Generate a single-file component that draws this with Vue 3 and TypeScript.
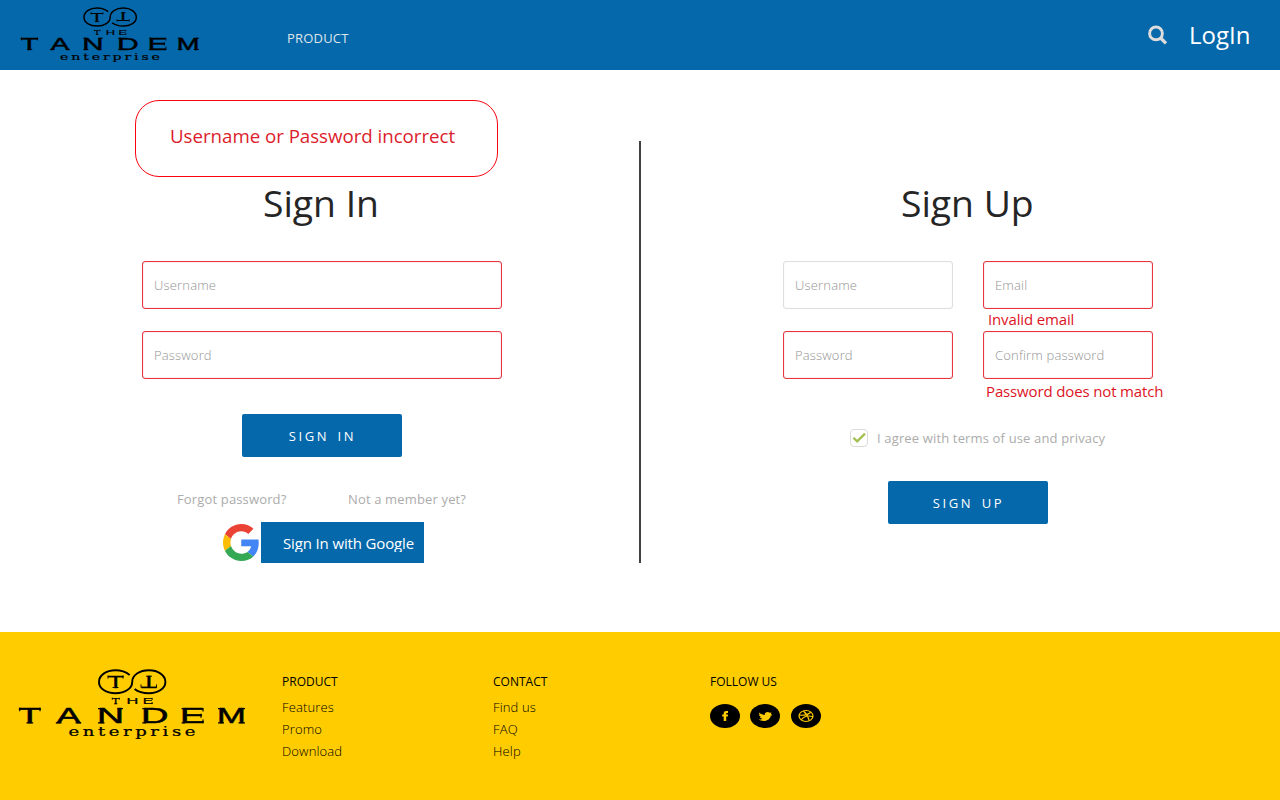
<script setup lang="ts">
import { ref } from 'vue'

interface Field {
  name: string
  label: string
  type: string
  invalid: boolean
  error?: string
}

const signInFields: Field[] = [
  { name: 'login-user', label: 'Username', type: 'text', invalid: true },
  { name: 'login-pass', label: 'Password', type: 'password', invalid: true },
]

const signUpFields: Field[] = [
  { name: 'user', label: 'Username', type: 'text', invalid: false },
  { name: 'email', label: 'Email', type: 'text', invalid: true, error: 'Invalid email' },
  { name: 'pass', label: 'Password', type: 'password', invalid: true },
  { name: 'confirm', label: 'Confirm password', type: 'password', invalid: true, error: 'Password does not match' },
]

const footerColumns = [
  { title: 'PRODUCT', links: ['Features', 'Promo', 'Download'] },
  { title: 'CONTACT', links: ['Find us', 'FAQ', 'Help'] },
]

const bigLetters = [
  { c: 'T', x: -0.5, w: 22.5 },
  { c: 'A', x: 37.5, w: 24 },
  { c: 'N', x: 77.9, w: 27 },
  { c: 'D', x: 121.9, w: 27.5 },
  { c: 'E', x: 161.1, w: 24.6 },
  { c: 'M', x: 197.9, w: 28.8 },
]
const smallLetters = [
  { c: 'T', x: 92.8, w: 7.8 },
  { c: 'H', x: 107.6, w: 11.8 },
  { c: 'E', x: 123.8, w: 10.2 },
]

const agreed = ref(true)
</script>

<template>
  <div class="page">
    <svg class="defs" width="0" height="0" aria-hidden="true">
      <symbol id="tandem" viewBox="0 0 226 71" preserveAspectRatio="none" overflow="visible">
        <path
          d="M110.700 5.900C107 3 102 1.300 96.500 1.300C87 1.300 80 6.300 80 12.900C80 19.500 87 24.200 96.500 24.200C106 24.200 113.200 19.500 113.200 12.900C113.200 6.200 120.500 1.300 130 1.300C139 1.300 146.400 6.300 146.400 12.900C146.400 19.500 139 24.200 130 24.200C124 24.200 119 22.800 115.600 20"
          fill="none" stroke="#000" stroke-width="1.9"
        />
        <!-- serif ticks that finish the wide capitals -->
        <path
          d="M.7 38.700V42.300M21 38.700V42.300M7.500 53.800H14.200M36.800 53.800H42.500M56.500 53.800H62.200M79 39.600H83M79 53.800H85.500M98.500 39.600H104M123.300 39.600H127M123.300 53.800H127M162.600 39.600H166M162.600 53.800H166M184 38.900V42.500M184 50.400V54.300M182 44.700V48.700M199 53.800H205M219.500 53.800H226M199 39.600H203M222 39.600H226"
          fill="none" stroke="#000" stroke-width="1.2"
        />
        <path
          d="M89 6.500V9.600M104 6.500V9.600M93.500 18.500H99.500M122 15.400V18.500M137.500 15.400V18.500M127 7.200H133M93.300 28.700V30.800M100.200 28.700V30.800M95 34.800H98.400M133.100 28.900V31M133.100 33V35.100"
          fill="none" stroke="#000" stroke-width="0.9"
        />
        <g font-family="'Liberation Sans', sans-serif" fill="#000" stroke="#000">
          <text x="88.400" y="18.600" font-size="17" stroke-width="0.300" textLength="16.300" lengthAdjust="spacingAndGlyphs">T</text>
          <text x="-137.900" y="-6.800" font-size="17" stroke-width="0.300" textLength="16.300" lengthAdjust="spacingAndGlyphs" transform="rotate(180)">T</text>
          <text
            v-for="l in smallLetters" :key="'s' + l.c" :x="l.x" y="35" font-size="9"
            stroke-width="0.200" :textLength="l.w" lengthAdjust="spacingAndGlyphs"
          >{{ l.c }}</text>
          <text
            v-for="l in bigLetters" :key="'b' + l.c" :x="l.x" y="54.100" font-size="21.600"
            stroke-width="0.500" :textLength="l.w" lengthAdjust="spacingAndGlyphs"
          >{{ l.c }}</text>
        </g>
        <text
          x="0" y="66.700" font-size="12.400" font-family="'DejaVu Serif', serif" stroke="#000" stroke-width="0.250"
          transform="translate(49.500 0) scale(1.450 1)" textLength="87.500" lengthAdjust="spacing"
        >enterprise</text>
      </symbol>
    </svg>

    <header class="topbar">
      <svg class="logo-top" role="img" aria-label="The Tandem Enterprise"><use href="#tandem" /></svg>
      <a class="nav-link">PRODUCT</a>
      <svg class="search" viewBox="0 0 20 20">
        <circle cx="8" cy="8.400" r="6.400" fill="none" stroke="#dcdcdc" stroke-width="2.900" />
        <path d="M12.600 13L18 18.400" stroke="#dcdcdc" stroke-width="3.400" />
      </svg>
      <a class="login">LogIn</a>
    </header>

    <main class="content">
      <section class="sign-in">
        <div class="alert">Username or Password incorrect</div>
        <h1>Sign In</h1>
        <form class="stack" @submit.prevent>
          <input
            v-for="f in signInFields" :key="f.name" :type="f.type" :placeholder="f.label"
            class="field" :class="{ invalid: f.invalid }"
          />
          <button class="btn">SIGN IN</button>
        </form>
        <div class="hints">
          <a>Forgot password?</a>
          <a>Not a member yet?</a>
        </div>
        <div class="google">
          <svg class="g-mark" viewBox="0 0 48 48" preserveAspectRatio="none">
            <path fill="#EA4335" d="M24 9.500c3.540 0 6.710 1.220 9.210 3.600l6.850-6.850C35.900 2.380 30.470 0 24 0 14.620 0 6.510 5.380 2.560 13.220l7.980 6.190C12.430 13.720 17.740 9.500 24 9.500z" />
            <path fill="#4285F4" d="M46.980 24.550c0-1.570-.15-3.090-.38-4.550H24v9.020h12.940c-.58 2.960-2.260 5.480-4.780 7.180l7.730 6c4.510-4.180 7.090-10.360 7.090-17.650z" />
            <path fill="#FBBC05" d="M10.530 28.590c-.48-1.450-.76-2.990-.76-4.590s.27-3.140.76-4.590l-7.980-6.190C.92 16.460 0 20.120 0 24s.92 7.540 2.560 10.780l7.970-6.190z" />
            <path fill="#34A853" d="M24 48c6.480 0 11.930-2.130 15.890-5.810l-7.730-6c-2.150 1.450-4.920 2.300-8.160 2.300-6.260 0-11.570-4.220-13.470-9.910l-7.980 6.190C6.510 42.620 14.620 48 24 48z" />
          </svg>
          <button class="g-btn"><span>Sign In with Google</span></button>
        </div>
      </section>

      <div class="divider"></div>

      <section class="sign-up">
        <h1>Sign Up</h1>
        <form @submit.prevent>
          <div class="grid">
            <div v-for="f in signUpFields" :key="f.name" class="cell">
              <input :type="f.type" :placeholder="f.label" class="field" :class="{ invalid: f.invalid }" />
              <p v-if="f.error" class="error" :class="f.name">{{ f.error }}</p>
            </div>
          </div>
          <label class="agree" @click="agreed = !agreed">
            <span class="box">
              <svg v-if="agreed" viewBox="0 0 18 18"><path d="M3.400 8.700L7.200 12.400L15 4.600" fill="none" stroke="#a4c051" stroke-width="2.300" /></svg>
            </span>
            <span>I agree with terms of use and privacy</span>
          </label>
          <button class="btn">SIGN UP</button>
        </form>
      </section>
    </main>

    <footer class="footer">
      <svg class="logo-bottom" role="img" aria-label="The Tandem Enterprise"><use href="#tandem" /></svg>
      <nav v-for="col in footerColumns" :key="col.title" class="col">
        <h2>{{ col.title }}</h2>
        <a v-for="l in col.links" :key="l">{{ l }}</a>
      </nav>
      <div class="follow">
        <h2>FOLLOW US</h2>
        <div class="social">
          <svg viewBox="0 0 30 24">
            <ellipse cx="15" cy="12" rx="15" ry="12" />
            <path fill="#ffcc00" d="M13.700 17V12.600H12.200V10.600H13.700V9.500C13.700 7.800 14.600 7 16.200 7H18V8.900H17C16.400 8.900 16.200 9.100 16.200 9.600V10.600H18L17.800 12.600H16.200V17Z" />
          </svg>
          <svg viewBox="0 0 30 24">
            <ellipse cx="15" cy="12" rx="15" ry="12" />
            <path fill="#ffcc00" d="M9 8.600C10.500 10.100 12.600 10.900 14.800 11C14.400 9.300 15.800 8 17.600 8C18.400 8 19.100 8.300 19.600 8.800L21.500 8.400L20.900 9.600L22.300 11.400L20.800 11.500C20.400 14.600 17.600 17 13.800 17C11.700 17 9.900 16.500 8.400 15.600C10 15.700 11.400 15.400 12.500 14.700C11.200 14.600 10.300 14 10 13H11.200C9.800 12.600 9 11.700 8.900 10.600L10.100 10.900C9.200 10.300 8.700 9.500 9 8.600Z" />
          </svg>
          <svg viewBox="0 0 30 24">
            <ellipse cx="15" cy="12" rx="15" ry="12" />
            <g fill="none" stroke="#ffcc00" stroke-width="1.200">
              <ellipse cx="15" cy="12" rx="7" ry="5.500" />
              <path d="M12.400 7C15 9.300 17.200 12.800 18.200 16.700M8.200 11.200C12.500 11.500 17 10.800 19.700 8.200M10.300 15.800C12.500 12.700 17 11.200 22 12.700" />
            </g>
          </svg>
        </div>
      </div>
    </footer>
  </div>
</template>

<style>
body {
  margin: 0;
  background: #fff;
}
</style>

<style scoped>
.page {
  width: 1280px;
  height: 800px;
  overflow: hidden;
  display: flex;
  flex-direction: column;
  font-family: 'Open Sans', sans-serif;
  font-size: 13px;
  letter-spacing: 0.15px;
}
.defs { position: absolute; }
svg { letter-spacing: 0; overflow: visible; }
h1, h2, p { margin: 0; font-weight: 400; }

.topbar {
  height: 70px;
  flex: none;
  display: flex;
  align-items: flex-start;
  background: #0568aa;
}
.logo-top { width: 178px; height: 56px; margin: 7px 0 0 21px; }
.nav-link { margin: 29px 0 0 88px; line-height: 18px; letter-spacing: 0.2px; color: #dfe5ea; }
.search { width: 20px; height: 20px; margin: 25px 0 0 auto; }
.login {
  width: 91px;
  margin: 18px 0 0 21px;
  font-size: 24px;
  line-height: 33px;
  letter-spacing: 0;
  color: #fff;
}

.content { height: 562px; flex: none; display: flex; align-items: flex-start; }
.sign-in { width: 639px; padding-top: 30px; }
.alert {
  box-sizing: border-box;
  width: 363px;
  height: 77px;
  margin-left: 135px;
  padding: 22px 0 0 34px;
  border: 1px solid #f90510;
  border-radius: 24px;
  font-size: 18.72px;
  line-height: 26px;
  letter-spacing: -0.03px;
  color: #dc1c2c;
}
h1 {
  font-size: 37.3px;
  line-height: 52px;
  letter-spacing: 0;
  color: #252525;
}
.sign-in h1 { margin-left: 263px; }
.stack {
  width: 360px;
  margin: 32px 0 0 142px;
  display: flex;
  flex-direction: column;
  align-items: center;
  gap: 22px;
}
.field {
  box-sizing: border-box;
  width: 100%;
  height: 48px;
  padding: 0 11px;
  border: 1px solid #dedede;
  border-radius: 3px;
  box-shadow: inset 0 0 1px #e4e4e4;
  outline: none;
  background: #fff;
  font: 300 13px 'Open Sans', sans-serif;
  letter-spacing: 0.17px;
}
.field::placeholder { color: #949494; opacity: 1; }
.field.invalid { border-color: #e83441; box-shadow: inset 0 0 1px #f0606a; }
.btn {
  display: block;
  width: 160px;
  height: 43px;
  padding: 2px 0 0 1px;
  border: 0;
  border-radius: 2px;
  background: #0568aa;
  color: #fff;
  font: 400 13px/41px 'Open Sans', sans-serif;
  letter-spacing: 2.6px;
  word-spacing: 2.4px;
}
.stack .btn { margin-top: 13px; }
.hints {
  display: flex;
  gap: 61.500px;
  margin: 33px 0 0 177px;
  line-height: 18px;
  color: #acacac;
}
.google { display: flex; align-items: flex-start; margin: 14px 0 0 223px; }
.g-mark { width: 36.500px; height: 37px; margin: 2px 1.500px 0 0; }
.g-btn {
  width: 163px;
  height: 41px;
  padding: 0 0 0 22px;
  border: 0;
  background: #0568aa;
  color: #fff;
  font: 400 15px 'Open Sans', sans-serif;
  letter-spacing: -0.14px;
  text-align: left;
}
.g-btn span {
  display: block;
  height: 17px;
  margin-top: 2px;
  line-height: 17px;
  overflow: hidden;
  white-space: nowrap;
}

.divider { width: 2px; height: 422px; margin-top: 71px; background: #404040; }

.sign-up { padding: 107px 0 0 142px; }
.sign-up h1 { margin-left: 118px; }
.grid {
  display: grid;
  grid-template-columns: 170px 170px;
  gap: 22px 30px;
  margin-top: 32px;
}
.cell { position: relative; height: 48px; }
.error {
  position: absolute;
  left: 5px;
  top: 48px;
  font-size: 15px;
  line-height: 20px;
  letter-spacing: -0.14px;
  white-space: nowrap;
  color: #dc1424;
}
.error.confirm { left: 3px; top: 50px; }
.agree {
  display: flex;
  align-items: center;
  gap: 9px;
  width: 300px;
  margin: 50px 0 0 67px;
  height: 18px;
  color: #acacac;
}
.box {
  box-sizing: border-box;
  width: 18px;
  height: 18px;
  border: 1px solid #dcdcdc;
  border-radius: 4px;
}
.box svg { display: block; width: 18px; height: 18px; margin: -1px; }
.sign-up .btn { margin: 34px 0 0 105px; }

.footer {
  height: 168px;
  flex: none;
  display: flex;
  align-items: flex-start;
  background: #ffcc00;
  color: #000;
}
.logo-bottom { width: 226px; height: 71px; margin: 37px 37px 0 19px; }
.col { display: flex; flex-direction: column; width: 211px; padding-top: 41px; }
.col + .col { width: 217px; }
h2 { font-size: 12px; line-height: 17px; letter-spacing: 0; }
.col h2 { margin-bottom: 6px; }
.col a { line-height: 22px; font-weight: 300; }
.follow { padding-top: 41px; }
.social { display: flex; gap: 10px; margin-top: 14px; }
.social svg { width: 30px; height: 24px; }
.social svg:last-child { margin-left: 1px; }
</style>
